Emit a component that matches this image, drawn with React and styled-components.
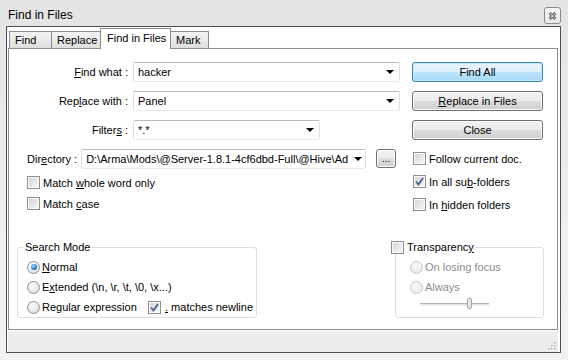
import React from "react";
import styled, { createGlobalStyle } from "styled-components";

const GlobalStyle = createGlobalStyle`
  html, body {
    margin: 0;
    padding: 0;
  }
  body {
    width: 568px;
    height: 360px;
    overflow: hidden;
    background: #ececec;
    font-family: "Liberation Sans", Arial, sans-serif;
    font-size: 11px;
    color: #000;
  }
`;

const Window = styled.div`
  width: 568px;
  height: 360px;
  box-sizing: border-box;
  padding: 0 7px 0 6px;
  background: linear-gradient(#e4e4e4, #eeeeee 60%, #f2f2f2);
  display: flex;
  flex-direction: column;
`;

const TitleBar = styled.div`
  height: 26px;
  display: flex;
  align-items: flex-start;
  justify-content: space-between;
  padding-left: 2px;
`;

const Title = styled.span`
  font-size: 12px;
  line-height: 14px;
  margin-top: 8px;
`;

const CloseButton = styled.div`
  width: 17px;
  height: 17px;
  margin-top: 7px;
  box-sizing: border-box;
  border: 1px solid #8a8a8a;
  border-radius: 3px;
  background: linear-gradient(#fbfbfb, #e9e9e9);
  display: flex;
  align-items: center;
  justify-content: center;
`;

const Client = styled.div`
  height: 327px;
  box-sizing: border-box;
  border: 1px solid #4e4e4e;
  background: #fff;
  padding: 0 2px 0 1px;
  display: flex;
  flex-direction: column;
`;

const TabStrip = styled.div`
  height: 21px;
  display: flex;
  align-items: flex-end;
  padding-left: 1px;
  position: relative;
  z-index: 1;
`;

const Tab = styled.div`
  width: ${(p) => p.$w}px;
  height: ${(p) => (p.$active ? 21 : 17)}px;
  margin-bottom: ${(p) => (p.$active ? -1 : 0)}px;
  margin-left: -1px;
  box-sizing: border-box;
  border: 1px solid #898c95;
  border-bottom: none;
  background: ${(p) =>
    p.$active ? "#fff" : "linear-gradient(#f3f3f3, #ebebeb 50%, #dedede)"};
  display: flex;
  align-items: center;
  padding: ${(p) => (p.$active ? "0 0 3px 6px" : "0 0 0 5px")};
  white-space: nowrap;
  &:first-child {
    margin-left: 0;
  }
`;

const Panel = styled.div`
  height: 282px;
  box-sizing: border-box;
  border: 1px solid #898c95;
  padding-top: 13px;
  display: flex;
  flex-direction: column;
`;

const TopArea = styled.div`
  display: flex;
  gap: 12px;
`;

const LeftCol = styled.div`
  width: 391px;
  display: flex;
  flex-direction: column;
`;

const FieldStack = styled.div`
  display: flex;
  flex-direction: column;
  gap: 9px;
`;

const FieldRow = styled.div`
  height: 20px;
  display: flex;
  align-items: center;
  padding-left: ${(p) => p.$indent || 0}px;
`;

const FieldLabel = styled.span`
  width: ${(p) => (p.$w ? `${p.$w}px` : "auto")};
  text-align: right;
  margin-right: ${(p) => p.$gap}px;
  white-space: nowrap;
`;

const Combo = styled.div`
  width: ${(p) => p.$w}px;
  height: 20px;
  box-sizing: border-box;
  border: 1px solid;
  border-color: #b9bcc3 #dbdfe6 #e3e9ef #dbdfe6;
  border-radius: 2px;
  display: flex;
  align-items: center;
  padding: 0 5px 0 4px;
  gap: 6px;
`;

const ComboText = styled.span`
  flex: 1;
  white-space: nowrap;
`;

const Arrow = styled.span`
  width: 0;
  height: 0;
  border-left: 4px solid transparent;
  border-right: 4px solid transparent;
  border-top: 4px solid #000;
  flex-shrink: 0;
`;

const SmallButton = styled.div`
  width: 20px;
  height: 19px;
  margin-left: 10px;
  margin-top: -2px;
  box-sizing: border-box;
  border: 1px solid #707070;
  border-radius: 3px;
  background: linear-gradient(#f2f2f2, #ebebeb 50%, #dddddd 50%, #cfcfcf);
  box-shadow: inset 0 0 0 1px #fcfcfc;
  display: flex;
  align-items: flex-end;
  justify-content: center;
  padding-bottom: 3px;
  font-size: 10px;
  line-height: 10px;
`;

const CheckStack = styled.div`
  display: flex;
  flex-direction: column;
  margin-top: ${(p) => p.$top}px;
  padding-left: ${(p) => p.$indent || 0}px;
`;

const OptionRow = styled.div`
  height: ${(p) => p.$h}px;
  display: flex;
  align-items: center;
  color: ${(p) => (p.$disabled ? "#8c8c8c" : "#000")};
  white-space: nowrap;
`;

const OptionText = styled.span`
  white-space: pre;
`;

const CheckBox = styled.span`
  width: 13px;
  height: 13px;
  box-sizing: border-box;
  border: 1px solid #8e8f8f;
  background: linear-gradient(135deg, #d2d2d2, #f3f3f3 85%);
  box-shadow: inset 0 0 0 1px #fbfbfb;
  margin-right: ${(p) => (p.$gap != null ? p.$gap : 3)}px;
  flex-shrink: 0;
  display: flex;
  align-items: center;
  justify-content: center;
`;

const RadioDot = styled.span`
  width: 13px;
  height: 13px;
  box-sizing: border-box;
  border-radius: 50%;
  border: 1px solid ${(p) => (p.$disabled ? "#c6c6c6" : "#8e8f8f")};
  background: ${(p) =>
    p.$disabled
      ? "radial-gradient(circle at 40% 35%, #fafafa, #ececec 70%)"
      : "radial-gradient(circle at 40% 35%, #fdfdfd, #e4e4e4 65%, #cdcdcd)"};
  margin-right: 2px;
  flex-shrink: 0;
  display: flex;
  align-items: center;
  justify-content: center;
  &::after {
    content: "";
    display: ${(p) => (p.$checked ? "block" : "none")};
    width: 6px;
    height: 6px;
    border-radius: 50%;
    background: radial-gradient(circle at 40% 35%, #9fdcff, #2a86cf 55%, #0c3f78);
  }
`;

const RightCol = styled.div`
  width: 131px;
  display: flex;
  flex-direction: column;
`;

const ButtonStack = styled.div`
  display: flex;
  flex-direction: column;
  gap: 9px;
`;

const Button = styled.div`
  height: 20px;
  box-sizing: border-box;
  border: 1px solid ${(p) => (p.$default ? "#3c7fb1" : "#707070")};
  border-radius: 3px;
  background: ${(p) =>
    p.$default
      ? "linear-gradient(#eaf6fd, #d9f0fc 50%, #bee6fd 50%, #a7d9f5)"
      : "linear-gradient(#f2f2f2, #ebebeb 50%, #dddddd 50%, #cfcfcf)"};
  box-shadow: inset 0 0 0 1px ${(p) => (p.$default ? "#bfeafb" : "#fcfcfc")};
  display: flex;
  align-items: center;
  justify-content: center;
`;

const BottomArea = styled.div`
  display: flex;
  gap: 138px;
  padding-left: 8px;
  margin-top: 25px;
`;

const Group = styled.fieldset`
  width: ${(p) => p.$w}px;
  margin: 0;
  min-width: 0;
  box-sizing: border-box;
  padding: 3px 0 ${(p) => p.$bottom}px ${(p) => p.$pad}px;
  border: 1px solid #d5dfe5;
  border-radius: 3px;
`;

const GroupLegend = styled.legend`
  height: 13px;
  line-height: 13px;
  padding: 0 2px;
  margin-left: ${(p) => p.$offset}px;
  display: flex;
  align-items: center;
  white-space: nowrap;
`;

const RadioLabel = styled.span`
  display: flex;
  align-items: center;
  width: ${(p) => (p.$w ? `${p.$w}px` : "auto")};
`;

const Slider = styled.div`
  height: 14px;
  width: 69px;
  margin-left: 10px;
  position: relative;
  display: flex;
  align-items: center;
`;

const Track = styled.div`
  width: 100%;
  height: 3px;
  box-sizing: border-box;
  border-top: 1px solid #b4b4b4;
  border-bottom: 1px solid #f4f4f4;
  background: #e2e2e2;
`;

const Thumb = styled.div`
  position: absolute;
  left: 47px;
  top: 1px;
  width: 5px;
  height: 11px;
  box-sizing: border-box;
  border: 1px solid #a4a4a4;
  border-radius: 2px;
  background: linear-gradient(90deg, #f4f4f4, #dedede);
`;

const StatusBar = styled.div`
  flex: 1;
  margin-top: 1px;
  background: #efedeb;
  display: flex;
  justify-content: flex-end;
  align-items: flex-end;
  padding: 0 2px 2px 0;
`;

const CheckMark = () => (
  <svg width="9" height="9" viewBox="0 0 9 9">
    <path d="M1 4.5 L3.5 7.5 L8 1" fill="none" stroke="#4b5f93" strokeWidth="1.8" />
  </svg>
);

const CloseGlyph = () => (
  <svg width="9" height="8" viewBox="0 0 9 8">
    <path d="M1.5 1 L7.5 7 M7.5 1 L1.5 7" stroke="#555" strokeWidth="3" />
    <path d="M1.5 1 L7.5 7 M7.5 1 L1.5 7" stroke="#fff" strokeWidth="1" />
  </svg>
);

const Gripper = () => (
  <svg width="8" height="8" viewBox="0 0 8 8">
    {[
      [6, 0],
      [3, 3],
      [6, 3],
      [0, 6],
      [3, 6],
      [6, 6],
    ].map(([x, y]) => (
      <g key={`${x}-${y}`}>
        <rect x={x + 1} y={y + 1} width="1.5" height="1.5" fill="#fff" />
        <rect x={x} y={y} width="1.5" height="1.5" fill="#a9a9a9" />
      </g>
    ))}
  </svg>
);

const Check = ({ checked, gap }) => (
  <CheckBox $gap={gap}>{checked && <CheckMark />}</CheckBox>
);

export default function App() {
  return (
    <>
      <GlobalStyle />
      <Window>
        <TitleBar>
          <Title>Find in Files</Title>
          <CloseButton>
            <CloseGlyph />
          </CloseButton>
        </TitleBar>

        <Client>
          <TabStrip>
            <Tab $w={43}>Find</Tab>
            <Tab $w={50}>Replace</Tab>
            <Tab $w={71} $active>
              Find in Files
            </Tab>
            <Tab $w={39}>Mark</Tab>
          </TabStrip>

          <Panel>
            <TopArea>
              <LeftCol>
                <FieldStack>
                  <FieldRow>
                    <FieldLabel $w={119} $gap={5}>
                      <u>F</u>ind what :
                    </FieldLabel>
                    <Combo $w={267}>
                      <ComboText>hacker</ComboText>
                      <Arrow />
                    </Combo>
                  </FieldRow>
                  <FieldRow>
                    <FieldLabel $w={119} $gap={5}>
                      Rep<u>l</u>ace with :
                    </FieldLabel>
                    <Combo $w={267}>
                      <ComboText>Panel</ComboText>
                      <Arrow />
                    </Combo>
                  </FieldRow>
                  <FieldRow>
                    <FieldLabel $w={119} $gap={5}>
                      Filter<u>s</u> :
                    </FieldLabel>
                    <Combo $w={187}>
                      <ComboText>*.*</ComboText>
                      <Arrow />
                    </Combo>
                  </FieldRow>
                  <FieldRow $indent={18}>
                    <FieldLabel $gap={4}>
                      Dir<u>e</u>ctory :
                    </FieldLabel>
                    <Combo $w={285}>
                      <ComboText>D:\Arma\Mods\@Server-1.8.1-4cf6dbd-Full\@Hive\Ad</ComboText>
                      <Arrow />
                    </Combo>
                    <SmallButton>...</SmallButton>
                  </FieldRow>
                </FieldStack>

                <CheckStack $top={3} $indent={18}>
                  <OptionRow $h={21}>
                    <Check />
                    <OptionText>
                      Match <u>w</u>hole word only
                    </OptionText>
                  </OptionRow>
                  <OptionRow $h={21}>
                    <Check />
                    <OptionText>
                      Match <u>c</u>ase
                    </OptionText>
                  </OptionRow>
                </CheckStack>
              </LeftCol>

              <RightCol>
                <ButtonStack>
                  <Button $default>Find All</Button>
                  <Button>
                    <span>
                      <u>R</u>eplace in Files
                    </span>
                  </Button>
                  <Button>Close</Button>
                </ButtonStack>

                <CheckStack $top={7} $indent={1}>
                  <OptionRow $h={23}>
                    <Check />
                    <OptionText>Follow current doc.</OptionText>
                  </OptionRow>
                  <OptionRow $h={23}>
                    <Check checked />
                    <OptionText>
                      In all su<u>b</u>-folders
                    </OptionText>
                  </OptionRow>
                  <OptionRow $h={23}>
                    <Check />
                    <OptionText>
                      In <u>h</u>idden folders
                    </OptionText>
                  </OptionRow>
                </CheckStack>
              </RightCol>
            </TopArea>

            <BottomArea>
              <Group $w={240} $pad={9} $bottom={0}>
                <GroupLegend $offset={-4}>Search Mode</GroupLegend>
                <OptionRow $h={20}>
                  <RadioDot $checked />
                  <OptionText>
                    <u>N</u>ormal
                  </OptionText>
                </OptionRow>
                <OptionRow $h={20}>
                  <RadioDot />
                  <OptionText>
                    E<u>x</u>tended (\n, \r, \t, \0, \x...)
                  </OptionText>
                </OptionRow>
                <OptionRow $h={20}>
                  <RadioLabel $w={121}>
                    <RadioDot />
                    <OptionText>
                      Re<u>g</u>ular expression
                    </OptionText>
                  </RadioLabel>
                  <Check checked gap={4} />
                  <OptionText>
                    <u>.</u> matches newline
                  </OptionText>
                </OptionRow>
              </Group>

              <Group $w={149} $pad={14} $bottom={4}>
                <GroupLegend $offset={-21}>
                  <Check />
                  <OptionText>
                    Transparenc<u>y</u>
                  </OptionText>
                </GroupLegend>
                <OptionRow $h={20} $disabled>
                  <RadioDot $disabled />
                  <OptionText>On losing focus</OptionText>
                </OptionRow>
                <OptionRow $h={20} $disabled>
                  <RadioDot $disabled />
                  <OptionText>Always</OptionText>
                </OptionRow>
                <Slider>
                  <Track />
                  <Thumb />
                </Slider>
              </Group>
            </BottomArea>
          </Panel>

          <StatusBar>
            <Gripper />
          </StatusBar>
        </Client>
      </Window>
    </>
  );
}
